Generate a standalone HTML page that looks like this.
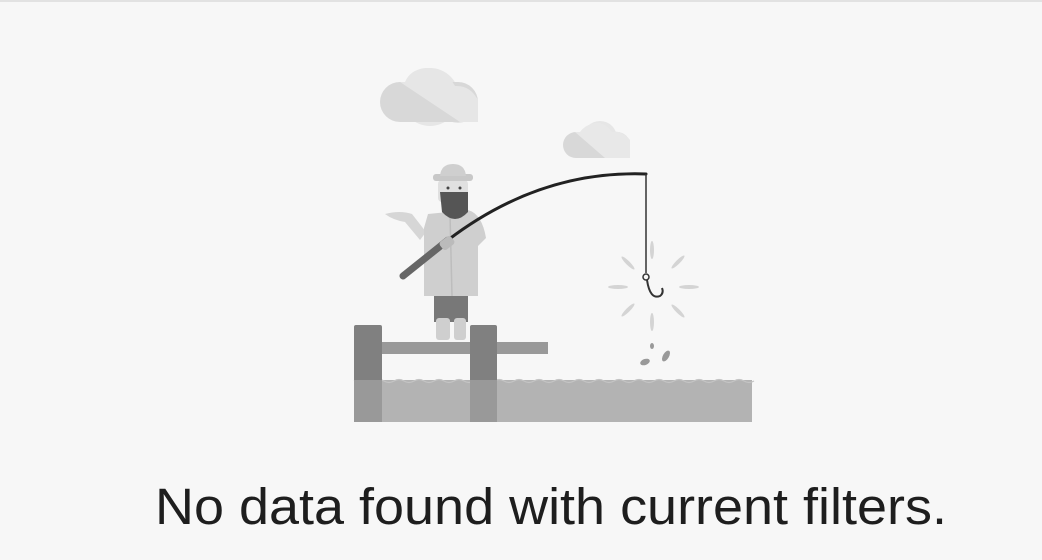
<!DOCTYPE html>
<html><head><style>
html,body{margin:0;padding:0;background:#f7f7f7;width:1042px;height:560px;overflow:hidden}
</style></head><body>
<svg width="1042" height="560" viewBox="0 0 1042 560" xmlns="http://www.w3.org/2000/svg">
<rect x="0" y="0" width="1042" height="2" fill="#e2e2e2"/>
<g>
<circle cx="430" cy="97" r="29" fill="#e6e6e6"/>
<circle cx="458" cy="105" r="18" fill="#e3e3e3"/>
<rect x="380" y="82" width="98" height="40" rx="20" fill="#d8d8d8"/>
<path d="M400 82 L460 122 L478 122 L478 100 Q470 85 455 86 Q445 68 425 68 Q410 70 405 82Z" fill="#e6e6e6"/>
</g>
<g>
<circle cx="600" cy="138" r="17" fill="#e6e6e6"/>
<rect x="563" y="132" width="67" height="26" rx="13" fill="#d8d8d8"/>
<path d="M575 132 L605 158 L630 158 L630 140 Q622 130 612 132 Q605 122 595 123 Q585 125 580 132Z" fill="#e8e8e8"/>
</g>
<rect x="354" y="380" width="398" height="42" fill="#b3b3b3"/>
<path d="M354 381 q5 -3 10 0 t10 0 t10 0 t10 0 t10 0 t10 0 t10 0 t10 0 t10 0 t10 0 t10 0 t10 0 t10 0 t10 0 t10 0 t10 0 t10 0 t10 0 t10 0 t10 0 t10 0 t10 0 t10 0 t10 0 t10 0 t10 0 t10 0 t10 0 t10 0 t10 0 t10 0 t10 0 t10 0 t10 0 t10 0 t10 0 t10 0 t10 0 t10 0 t10 0" fill="none" stroke="#c4c4c4" stroke-width="1.2"/>
<rect x="382" y="342" width="166" height="12" fill="#999"/>
<rect x="354" y="325" width="28" height="97" rx="2" fill="#808080"/>
<rect x="470" y="325" width="27" height="97" rx="2" fill="#808080"/>
<rect x="354" y="380" width="28" height="42" fill="#999"/>
<rect x="470" y="380" width="27" height="42" fill="#999"/>
<rect x="434" y="292" width="34" height="30" fill="#787878"/>
<rect x="436" y="318" width="14" height="22" rx="3" fill="#cfcfcf"/>
<rect x="454" y="318" width="12" height="22" rx="3" fill="#cfcfcf"/>
<path d="M385 214 Q400 210 412 214 L426 232 L420 240 L405 222 Q393 220 385 214Z" fill="#d6d6d6"/>
<path d="M428 214 L468 210 Q482 214 486 238 L478 246 L478 296 L424 296 L424 228Z" fill="#cfcfcf"/>
<path d="M450 214 L452 296" stroke="#bdbdbd" stroke-width="1.5"/>
<rect x="438" y="180" width="30" height="22" rx="4" fill="#e0e0e0"/>
<path d="M440 192 L468 192 L468 212 Q455 226 442 212Z" fill="#555"/>
<rect x="433" y="174" width="40" height="7" rx="3" fill="#c8c8c8"/>
<path d="M440 176 Q441 164 453 164 Q465 164 466 176Z" fill="#cfcfcf"/>
<circle cx="448" cy="188" r="1.5" fill="#444"/><circle cx="460" cy="188" r="1.5" fill="#444"/>
<path d="M403 276 L448 240" stroke="#666" stroke-width="7" stroke-linecap="round"/>
<path d="M448 240 Q540 170 646 174" stroke="#222" stroke-width="3" fill="none" stroke-linecap="round"/>
<rect x="440" y="238" width="14" height="10" rx="3" fill="#bbb" transform="rotate(-38 447 243)"/>
<path d="M646 174 L646 273" stroke="#333" stroke-width="1.5"/>
<circle cx="646" cy="277" r="3" fill="none" stroke="#333" stroke-width="1.5"/>
<path d="M647 280 Q650 300 660 296 Q664 293 662 288" fill="none" stroke="#333" stroke-width="2"/>
<g fill="#d4d4d4">
<ellipse cx="652" cy="250" rx="2" ry="9"/>
<ellipse cx="652" cy="322" rx="2" ry="9"/>
<ellipse cx="618" cy="287" rx="10" ry="2"/>
<ellipse cx="689" cy="287" rx="10" ry="2"/>
<ellipse cx="628" cy="263" rx="2" ry="9" transform="rotate(-45 628 263)"/>
<ellipse cx="678" cy="262" rx="2" ry="9" transform="rotate(45 678 262)"/>
<ellipse cx="628" cy="310" rx="2" ry="9" transform="rotate(45 628 310)"/>
<ellipse cx="678" cy="311" rx="2" ry="9" transform="rotate(-45 678 311)"/>
</g>
<g fill="#999">
<ellipse cx="645" cy="362" rx="5" ry="3" transform="rotate(-20 645 362)"/>
<ellipse cx="666" cy="356" rx="3" ry="6" transform="rotate(30 666 356)"/>
<ellipse cx="652" cy="346" rx="2" ry="3"/>
</g>
<text x="155" y="524" font-family="Liberation Sans, sans-serif" font-size="51" fill="#1e1e1e" textLength="792" lengthAdjust="spacingAndGlyphs">No data found with current filters.</text>
</svg>
</body></html>
